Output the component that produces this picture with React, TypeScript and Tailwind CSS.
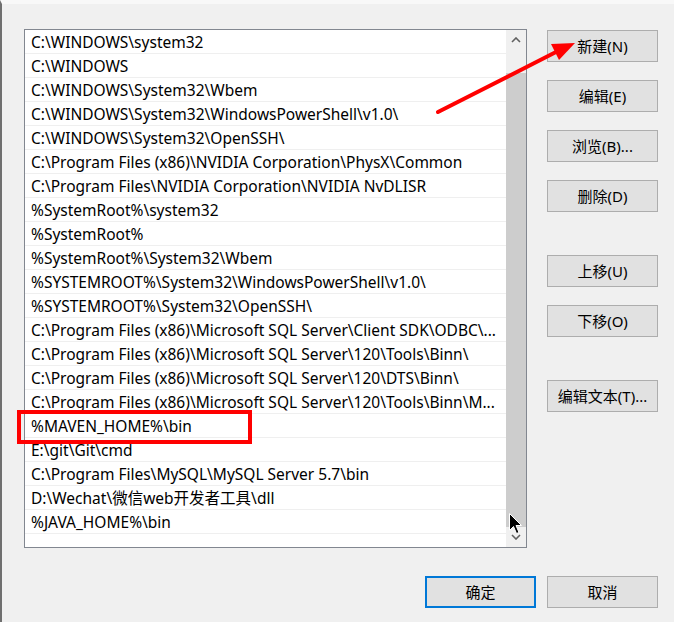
import React from "react";

const PATHS: string[] = [
  "C:\\WINDOWS\\system32",
  "C:\\WINDOWS",
  "C:\\WINDOWS\\System32\\Wbem",
  "C:\\WINDOWS\\System32\\WindowsPowerShell\\v1.0\\",
  "C:\\WINDOWS\\System32\\OpenSSH\\",
  "C:\\Program Files (x86)\\NVIDIA Corporation\\PhysX\\Common",
  "C:\\Program Files\\NVIDIA Corporation\\NVIDIA NvDLISR",
  "%SystemRoot%\\system32",
  "%SystemRoot%",
  "%SystemRoot%\\System32\\Wbem",
  "%SYSTEMROOT%\\System32\\WindowsPowerShell\\v1.0\\",
  "%SYSTEMROOT%\\System32\\OpenSSH\\",
  "C:\\Program Files (x86)\\Microsoft SQL Server\\Client SDK\\ODBC\\...",
  "C:\\Program Files (x86)\\Microsoft SQL Server\\120\\Tools\\Binn\\",
  "C:\\Program Files (x86)\\Microsoft SQL Server\\120\\DTS\\Binn\\",
  "C:\\Program Files (x86)\\Microsoft SQL Server\\120\\Tools\\Binn\\M...",
  "%MAVEN_HOME%\\bin",
  "E:\\git\\Git\\cmd",
  "C:\\Program Files\\MySQL\\MySQL Server 5.7\\bin",
  "D:\\Wechat\\微信web开发者工具\\dll",
  "%JAVA_HOME%\\bin",
];

const FONT = "font-['Noto_Sans','Noto_Sans_CJK_SC',sans-serif]";

function Btn({ label, primary }: { label: string; primary?: boolean }) {
  return (
    <div
      className={
        "flex h-[32px] w-[111px] items-center justify-center bg-[#e1e1e1] pt-[1px] text-[15px] text-black " +
        (primary ? "border-2 border-[#0078d7]" : "border border-[#adadad]")
      }
    >
      {label}
    </div>
  );
}

/** Windows "edit environment variable" path list dialog. */
export default function App() {
  return (
    <div
      className={`relative h-[622px] w-[674px] overflow-hidden border-l-2 border-t-4 border-l-[#6f6f6f] border-t-[#f8f8f8] bg-[#f0f0f0] ${FONT}`}
    >
      <div className="flex pl-[22px] pt-[25px]">
        {/* list box */}
        <div className="flex h-[519px] w-[503px] border border-[#828790] bg-white">
          <div className="flex-1 overflow-hidden">
            {PATHS.map((p) => (
              <div
                key={p}
                className="flex h-[24px] items-center overflow-hidden whitespace-nowrap border-b border-[#efefef] pl-[6px] pt-[3px] text-[15.5px] leading-none text-black"
              >
                {p}
              </div>
            ))}
          </div>
          {/* scrollbar */}
          <div className="flex w-[20px] flex-col bg-[#f0f0f0]">
            <div className="flex h-[20px] items-center justify-center">
              <svg width="10" height="6" viewBox="0 0 10 6">
                <polyline points="1,5 5,1 9,5" fill="none" stroke="#606060" strokeWidth="1.6" />
              </svg>
            </div>
            <div className="h-[23px]" />
            <div className="flex-1 bg-[#cdcdcd]" />
            <div className="flex h-[20px] items-center justify-center">
              <svg width="10" height="6" viewBox="0 0 10 6">
                <polyline points="1,1 5,5 9,1" fill="none" stroke="#606060" strokeWidth="1.6" />
              </svg>
            </div>
          </div>
        </div>

        {/* side buttons */}
        <div className="ml-[20px] flex flex-col pt-[1px]">
          <div className="flex flex-col gap-[18px]">
            <Btn label="新建(N)" />
            <Btn label="编辑(E)" />
            <Btn label="浏览(B)..." />
            <Btn label="删除(D)" />
          </div>
          <div className="mt-[43px] flex flex-col gap-[18px]">
            <Btn label="上移(U)" />
            <Btn label="下移(O)" />
          </div>
          <div className="mt-[43px]">
            <Btn label="编辑文本(T)..." />
          </div>
        </div>
      </div>

      {/* bottom buttons */}
      <div className="mt-[28px] flex justify-end gap-[11px] pr-[16px]">
        <Btn label="确定" primary />
        <Btn label="取消" />
      </div>

      {/* annotations */}
      <div className="absolute left-[15px] top-[406px] h-[34px] w-[235px] border-4 border-[#ff0000]" />
      <svg className="absolute left-[-2px] top-[-4px]" width="674" height="622" viewBox="0 0 674 622">
        <line x1="438" y1="112" x2="556" y2="52" stroke="#ff0000" strokeWidth="4" strokeLinecap="round" />
        <polygon points="575,43 551,44 559,60" fill="#ff0000" />
      </svg>

      {/* mouse cursor */}
      <svg className="absolute left-[507px] top-[509px]" width="14" height="22" viewBox="0 0 14 22">
        <path d="M0.5 0.5 V17.5 L4.5 13.5 L7.5 20.5 L10 19.5 L7 12.5 H12.5 Z" fill="#000" stroke="#fff" strokeWidth="1" />
      </svg>
    </div>
  );
}
